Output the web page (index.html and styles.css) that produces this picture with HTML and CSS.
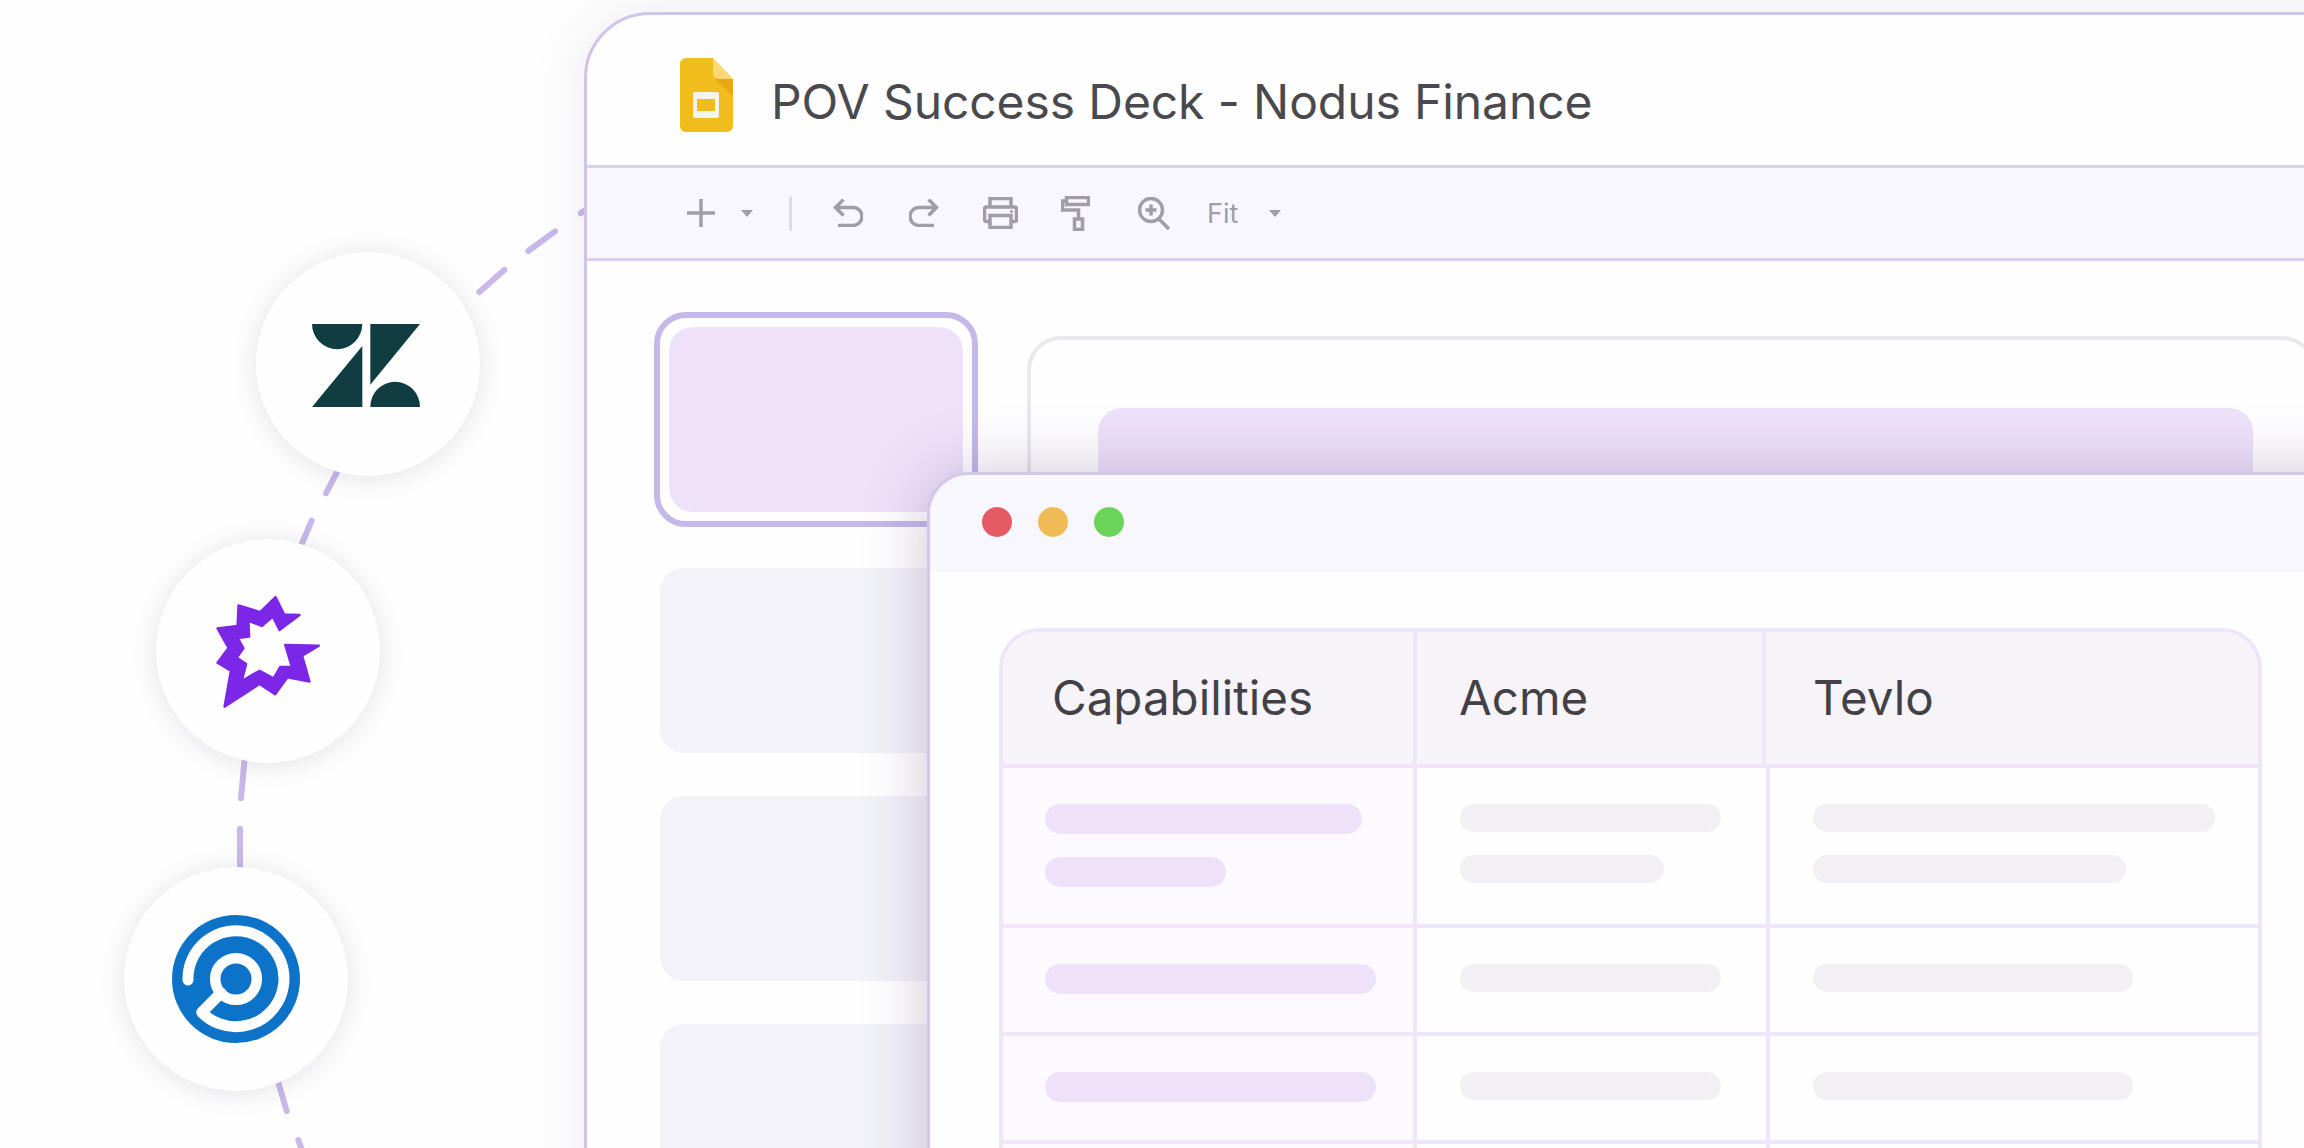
FILE: index.html
```html
<!DOCTYPE html>
<html lang="en">
<head>
  <meta charset="UTF-8" />
  <meta name="viewport" content="width=device-width, initial-scale=1.0"/>
  <title>POV Success Deck - Nodus Finance</title>
  <link rel="stylesheet" href="styles.css">
</head>
<body>

  <!-- dashed route behind the integration badges -->
  <svg class="route" width="600" height="1148" viewBox="0 0 600 1148">
    <line x1="590" y1="207" x2="580.7" y2="213.3"/>
    <line x1="555" y1="231.3" x2="528.3" y2="251"/>
    <line x1="504.3" y1="270" x2="479.3" y2="292"/>
    <line x1="340" y1="466" x2="326" y2="493.3"/>
    <line x1="311.7" y1="520.7" x2="300" y2="548"/>
    <line x1="244.5" y1="760" x2="241" y2="798.3"/>
    <line x1="240" y1="828.7" x2="240" y2="870"/>
    <line x1="277" y1="1078" x2="286.7" y2="1111"/>
    <line x1="298.3" y1="1140" x2="304" y2="1156"/>
  </svg>

  <div class="badge badge-zendesk">
    <svg width="108" height="83" viewBox="0 0 108 83">
      <path fill="#0f3d42" d="M0 0H50.3A25.15 25.15 0 0 1 0 0Z"/>
      <path fill="#0f3d42" d="M50.3 22V83H0Z"/>
      <path fill="#0f3d42" d="M58.3 0H108L58.3 60.7Z"/>
      <path fill="#0f3d42" d="M58.3 83A24.85 25.3 0 0 1 108 83Z"/>
    </svg>
  </div>

  <div class="badge badge-burst">
    <svg width="107" height="115" viewBox="225 222 320 345">
      <path fill="#7c27e8" stroke="#7c27e8" stroke-width="7" stroke-linejoin="round" d="M253 560L272 452L232 428L265 384L232 325L292 318L295 256L360 276L406 231L432 283L478 285L418 330L398 290L365 318L325 303L327 350L293 354L310 385L290 413L318 432L305 483L358 452L400 475L420 441L455 441L435 375L536 377L486 407L508 485L442 472L405 523L358 492Z"/>
    </svg>
  </div>

  <div class="badge badge-scope">
    <svg width="128" height="128" viewBox="-64 -64 128 128">
      <circle r="64" fill="#0c73c8"/>
      <circle r="20.8" fill="none" stroke="#fefefe" stroke-width="10.5"/>
      <path fill="none" stroke="#fefefe" stroke-width="11" stroke-linecap="round" stroke-linejoin="round" d="M-48 1A48 48 0 1 1-34.3 33.3L-15 14"/>
    </svg>
  </div>

  <div class="deck">
    <header class="deck-header">
      <svg class="deck-icon" width="53" height="74" viewBox="0 0 53 74">
        <path fill="#f1bd1d" d="M6 0H33L53 21V68a6 6 0 0 1-6 6H6a6 6 0 0 1-6-6V6a6 6 0 0 1 6-6Z"/>
        <path fill="#e8a812" d="M35 21H53V38Z"/>
        <path fill="#fbd775" d="M33 0L53 21H39a6 6 0 0 1-6-6Z"/>
        <rect x="13" y="34" width="26" height="26" rx="2" fill="#f5f2f2"/>
        <rect x="17" y="41" width="18" height="12" fill="#f1bd1d"/>
      </svg>
      <h1 class="deck-title">POV Success Deck - Nodus Finance</h1>
    </header>

    <div class="toolbar">
      <svg class="tool-plus" width="28" height="28" viewBox="0 0 28 28"><path d="M0 14H28M14 0V28"/></svg>
      <span class="caret caret-plus"></span>
      <span class="tool-sep"></span>
      <span class="tool">
        <svg width="30" height="28" viewBox="0 0 30 28"><path d="M5 26.500H20a8.700 8.700 0 0 0 0-18H2.500M10.500 0.500L2.500 8.500L10.500 16.500"/></svg>
      </span>
      <span class="tool">
        <svg width="30" height="28" viewBox="0 0 30 28"><path d="M25 26.500H10a8.700 8.700 0 0 1 0-18H27.500M19.500 0.500L27.500 8.500L19.500 16.500"/></svg>
      </span>
      <span class="tool">
        <svg width="35" height="32" viewBox="0 0 35 32"><path d="M7 10V1.500H28V10M7 24.500H3.500a2 2 0 0 1-2-2V12a2 2 0 0 1 2-2H31.500a2 2 0 0 1 2 2V22.500a2 2 0 0 1-2 2H28M7 18.500H28V30.500H7Z"/><circle class="dot" cx="28.500" cy="14.500" r="1.500"/></svg>
      </span>
      <span class="tool tool-roller">
        <svg width="29" height="35" viewBox="0 0 29 35"><path d="M5.500 1.500H27.500V8.500H5.500ZM5.500 5H1.500V14H17.500V23M13.500 23H21.500V33.500H13.500Z"/></svg>
      </span>
      <span class="tool tool-zoom">
        <svg width="32" height="33" viewBox="0 0 32 33"><circle cx="13" cy="13" r="11.500"/><path d="M7.500 13H18.500M13 7.500V18.500M21 22L31 32"/></svg>
      </span>
      <span class="tool-fit">Fit</span>
      <span class="caret"></span>
    </div>

    <div class="deck-body">
      <div class="thumbs">
        <div class="thumb-active"><div class="thumb-fill"></div></div>
        <div class="thumb"></div>
        <div class="thumb"></div>
        <div class="thumb"></div>
      </div>
      <div class="slide">
        <div class="slide-banner"></div>
      </div>
    </div>
  </div>

  <div class="sheet">
    <div class="sheet-bar">
      <span class="light light-red"></span>
      <span class="light light-amber"></span>
      <span class="light light-green"></span>
    </div>
    <div class="sheet-body">
      <div class="compare">
        <div class="compare-row compare-head">
          <div class="cell">Capabilities</div>
          <div class="cell">Acme</div>
          <div class="cell">Tevlo</div>
        </div>
        <div class="compare-row row-tall">
          <div class="cell cell-first">
            <span class="bar bar-purple w-317"></span>
            <span class="bar bar-purple w-181"></span>
          </div>
          <div class="cell">
            <span class="bar bar-grey w-261"></span>
            <span class="bar bar-grey w-204"></span>
          </div>
          <div class="cell">
            <span class="bar bar-grey w-402"></span>
            <span class="bar bar-grey w-313"></span>
          </div>
        </div>
        <div class="compare-row">
          <div class="cell cell-first"><span class="bar bar-purple w-331"></span></div>
          <div class="cell"><span class="bar bar-grey w-261"></span></div>
          <div class="cell"><span class="bar bar-grey w-320"></span></div>
        </div>
        <div class="compare-row">
          <div class="cell cell-first"><span class="bar bar-purple w-331"></span></div>
          <div class="cell"><span class="bar bar-grey w-261"></span></div>
          <div class="cell"><span class="bar bar-grey w-320"></span></div>
        </div>
        <div class="compare-row">
          <div class="cell cell-first"></div>
          <div class="cell"></div>
          <div class="cell"></div>
        </div>
      </div>
    </div>
  </div>

</body>
</html>
```

FILE: styles.css
```css
* {
  box-sizing: border-box;
}

body {
  position: relative;
  margin: 0;
  width: 2304px;
  height: 1148px;
  overflow: hidden;
  background-color: #fefefe;
  font-family: Inter, "Liberation Sans", sans-serif;
}

/* route and badges */
.route {
  position: absolute;
  left: 0;
  top: 0;
}

.route line {
  stroke: #c9b8ea;
  stroke-width: 6;
  stroke-linecap: round;
}

.badge {
  position: absolute;
  display: flex;
  align-items: center;
  justify-content: center;
  width: 224px;
  height: 224px;
  border-radius: 50%;
  background-color: #fefefe;
  box-shadow: 0 2px 26px rgba(40, 30, 60, 0.13);
}

.badge-zendesk {
  left: 256px;
  top: 252px;
  padding: 3px 5px 0 0;
}

.badge-burst {
  left: 156px;
  top: 539px;
}

.badge-scope {
  left: 124px;
  top: 867px;
}

/* main deck window */
.deck {
  position: relative;
  margin: 12px 0 0 584px;
  width: 1800px;
  height: 1300px;
  background-color: #fefefe;
  border: 3px solid #cfc5e8;
  border-radius: 66px 0 0 0;
  box-shadow: 0 0 60px rgba(60, 40, 100, 0.09);
}

.deck-header {
  display: flex;
  align-items: center;
  gap: 38px;
  height: 150px;
  padding: 6px 0 0 93px;
}

.deck-icon {
  margin-top: 3px;
}

.deck-title {
  margin: 0;
  padding-top: 16px;
  font-size: 48px;
  font-weight: 400;
  letter-spacing: -0.1px;
  color: #4a494d;
}

.toolbar {
  display: flex;
  align-items: center;
  height: 96px;
  padding-left: 100px;
  background-color: #f8f6fe;
  border-top: 3px solid #dccfee;
  border-bottom: 3px solid #dccfee;
}

.toolbar svg {
  fill: none;
  stroke: #a09ca8;
  stroke-width: 3.5;
}

.toolbar .dot {
  fill: #a09ca8;
  stroke: none;
}

.caret {
  width: 0;
  height: 0;
  border-left: 6.5px solid transparent;
  border-right: 6.5px solid transparent;
  border-top: 7px solid #a09ca8;
}

.caret-plus {
  margin-left: 26px;
}

.tool-sep {
  width: 3px;
  height: 35px;
  margin: 0 18px 0 36px;
  border-radius: 2px;
  background-color: #dcdae6;
}

.tool {
  display: flex;
  justify-content: center;
  width: 76px;
}

.tool-roller {
  padding-right: 2px;
}

.tool-zoom {
  margin-left: 2px;
}

.tool-fit {
  margin: 0 31px 0 15px;
  font-size: 27px;
  color: #a09ca8;
}

.deck-body {
  display: flex;
  align-items: flex-start;
  padding: 51px 0 0 67px;
}

.thumbs {
  display: flex;
  flex-direction: column;
  gap: 43px;
  width: 324px;
}

.thumb-active {
  height: 215px;
  margin-bottom: -2px;
  padding: 9px;
  background-color: #fefefe;
  border: 6px solid #c5b8ea;
  border-radius: 32px;
}

.thumb-fill {
  height: 100%;
  background-color: #eee2fa;
  border-radius: 24px;
}

.thumb {
  width: 312px;
  height: 185px;
  margin-left: 6px;
  background-color: #f2f2f8;
  border-radius: 24px;
}

.slide {
  width: 1289px;
  height: 900px;
  margin: 24px 0 0 49px;
  padding: 68px 59px 0 67px;
  border: 4px solid #e9e8ec;
  border-radius: 34px;
}

.slide-banner {
  height: 300px;
  background-color: #ede2fa;
  border-radius: 24px;
}

/* floating comparison sheet */
.sheet {
  position: absolute;
  left: 927px;
  top: 472px;
  width: 1500px;
  height: 800px;
  background-color: #fefefe;
  border: 3px solid #d5c8e6;
  border-radius: 42px 0 0 0;
  box-shadow: 0 0 64px rgba(70, 40, 110, 0.26);
}

.sheet-bar {
  display: flex;
  align-items: center;
  gap: 26px;
  height: 97px;
  padding: 0 0 3px 52px;
  background-color: #f9f7fe;
  border-radius: 39px 0 0 0;
}

.light {
  width: 30px;
  height: 30px;
  border-radius: 50%;
}

.light-red {
  background-color: #e55b63;
}

.light-amber {
  background-color: #f0bb55;
}

.light-green {
  background-color: #6ad45a;
}

.sheet-body {
  padding: 56px 0 0 69px;
}

.compare {
  width: 1263px;
  border: 4px solid #eee5fb;
  border-bottom: 0;
  border-radius: 40px 40px 0 0;
  overflow: hidden;
}

.compare-row {
  display: grid;
  grid-template-columns: 414px 353px 1fr;
  height: 108px;
  border-bottom: 4px solid #eee5fb;
}

.compare-head {
  grid-template-columns: 414px 349px 1fr;
  height: 136px;
  background-color: #f6f4f9;
  font-size: 47.5px;
  line-height: 1;
  color: #434146;
}

.compare-head .cell {
  justify-content: center;
  padding: 0 0 0 49px;
}

.compare-head .cell:nth-child(2) {
  padding-left: 42px;
}

.compare-head .cell:nth-child(3) {
  padding-left: 47px;
}

.row-tall {
  height: 160px;
}

.cell {
  display: flex;
  flex-direction: column;
  align-items: flex-start;
  gap: 23px;
  padding: 36px 0 0 43px;
  border-right: 4px solid #eee5fb;
}

.cell:last-child {
  border-right: 0;
}

.cell-first {
  padding-left: 42px;
  background-color: #fcfaff;
}

.bar {
  display: block;
  height: 30px;
  border-radius: 15px;
}

.bar-purple {
  background-color: #eee2fa;
}

.bar-grey {
  height: 28px;
  background-color: #f2f0f5;
}

.w-181 { width: 181px; }
.w-204 { width: 204px; }
.w-261 { width: 261px; }
.w-313 { width: 313px; }
.w-317 { width: 317px; }
.w-320 { width: 320px; }
.w-331 { width: 331px; }
.w-402 { width: 402px; }
```
